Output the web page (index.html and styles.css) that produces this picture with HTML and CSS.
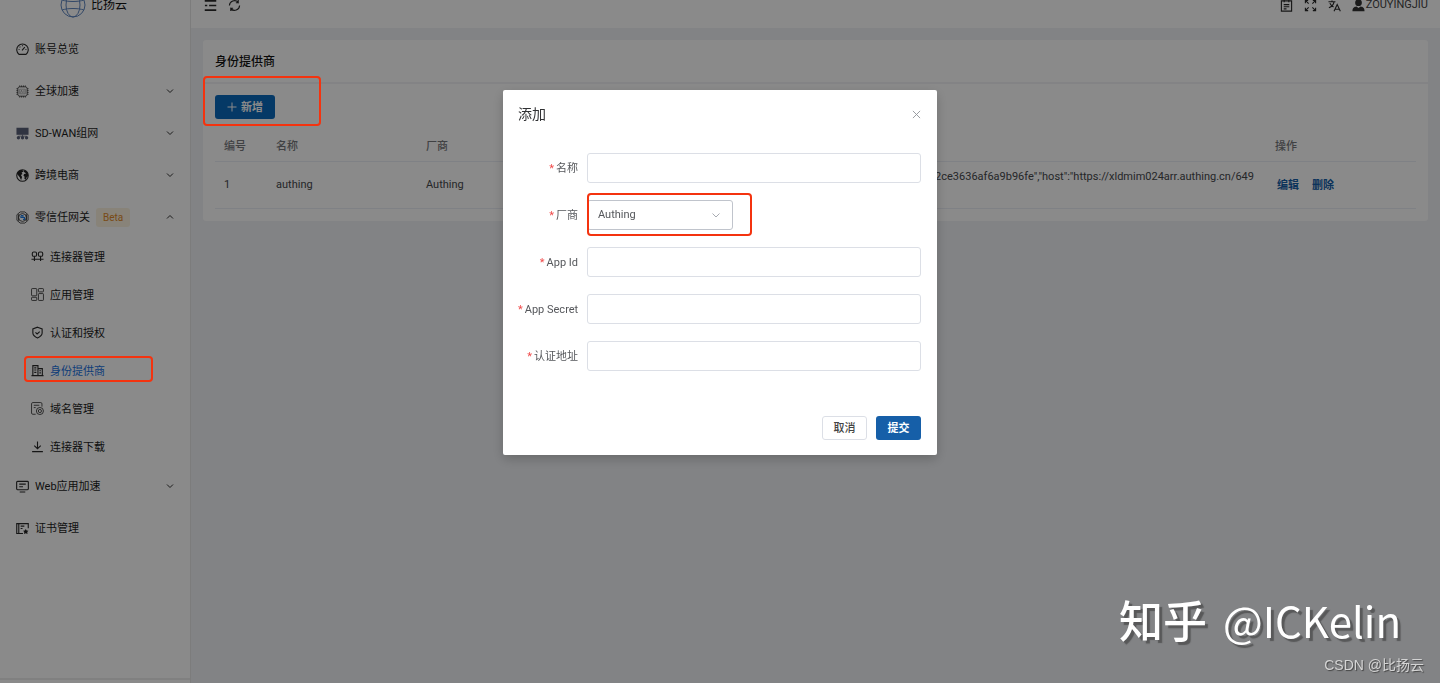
FILE: index.html
```html
<!DOCTYPE html>
<html lang="zh-CN">
<head>
<meta charset="utf-8">
<title>身份提供商</title>
<link rel="stylesheet" href="styles.css">
</head>
<body>
<div class="app">
  <aside class="sidebar">
    <a class="brand" href="#">
      <svg class="brand-mark" viewBox="0 0 26 26" fill="none" stroke="#5f86c0" stroke-width="1"><circle cx="13" cy="13" r="12"/><ellipse cx="13" cy="13" rx="7" ry="12"/><path d="M2 18c6-2 16-2 22 0M2 8c6 2 16 2 22 0"/></svg>
      <span>比扬云</span>
    </a>
    <nav class="menu">
      <a class="item" href="#"><svg class="icon" viewBox="0 0 14 14"><path d="M3.200 12.200a6.200 6.200 0 1 1 7.600 0z"/><path d="M6.500 8l3-3.500M7 2.500v1M2.800 7h1M10.200 7h1M4 4l.6.6"/></svg><span>账号总览</span></a>
      <a class="item" href="#"><svg class="icon thin" viewBox="0 0 14 14"><rect x="2" y="2" width="10" height="10" rx="2"/><path d="M4 .5V2M6 .5V2M8 .5V2M10 .5V2M4 12v1.500M6 12v1.500M8 12v1.500M10 12v1.500M.5 4H2M.5 6H2M.5 8H2M.5 10H2M12 4h1.500M12 6h1.500M12 8h1.500M12 10h1.500"/><path class="faint" d="M4 4.500h6v5H4zM5 8.500l1-3 1 3M8.500 5.500v3"/></svg><span>全球加速</span><svg class="arrow" viewBox="0 0 8 8"><path d="M1 2.500l3 3 3-3"/></svg></a>
      <a class="item" href="#"><svg class="icon solid slate" viewBox="0 0 14 14"><rect x=".5" y=".8" width="13" height="7.600"/><path d="M6.600 8h.8v1.500h-.8zM2.500 9.400h9v.7h-9z"/><circle cx="2.600" cy="11.600" r="1.800"/><circle cx="7" cy="11.600" r="1.800"/><circle cx="11.400" cy="11.600" r="1.800"/></svg><span>SD-WAN组网</span><svg class="arrow" viewBox="0 0 8 8"><path d="M1 2.500l3 3 3-3"/></svg></a>
      <a class="item" href="#"><svg class="icon" viewBox="0 0 14 14"><circle cx="7" cy="7" r="6.200"/><path class="fill" d="M1 5C2.200 2 4.500.8 7 1.200L7.800 3 6 3.800l1 1.700-1.700 1 1.200 2L5.500 12 4 9 2.500 7zM8.500 1.500l2.500.7c1.800 1.500 2.300 3.500 2 5.500L11.500 9l-1 2.500L9 10.500l.3-2.200L8 7l.7-1.500 2-.3-1-1.400-1.500-.6z"/></svg><span>跨境电商</span><svg class="arrow" viewBox="0 0 8 8"><path d="M1 2.500l3 3 3-3"/></svg></a>
      <a class="item" href="#"><svg class="icon thin" viewBox="0 0 14 14"><circle cx="7" cy="7" r="4.200"/><path d="M4.500 1h5L13 4v6l-3.500 3h-5L1 10V4zM2.700 3.500v7M11.300 3.500v7"/><path class="blue" d="M5.300 5h2.200v2h1.700v2H7.500M5.300 5v2h2.200"/></svg><span>零信任网关</span><span class="beta">Beta</span><svg class="arrow" viewBox="0 0 8 8"><path d="M1 5.500l3-3 3 3"/></svg></a>
      <div class="submenu">
        <a class="subitem" href="#"><svg class="icon" viewBox="0 0 14 14"><rect x="1.400" y="2.200" width="4.600" height="4.600" rx="1.500"/><rect x="8" y="2.200" width="4.600" height="4.600" rx="1.500"/><path d="M3.700 6.800v5M10.300 6.800v5M.5 10h13"/></svg><span>连接器管理</span></a>
        <a class="subitem" href="#"><svg class="icon thin" viewBox="0 0 14 14"><rect x=".6" y=".6" width="5.600" height="7.800" rx=".7"/><rect x="8" y=".6" width="5.400" height="3.600" rx=".7"/><rect x=".6" y="10" width="5.600" height="3.400" rx=".7"/><rect x="8" y="6" width="5.400" height="7.400" rx=".7"/></svg><span>应用管理</span></a>
        <a class="subitem" href="#"><svg class="icon" viewBox="0 0 14 14"><path d="M7 1.300l5 1.900v4.300c0 2.200-2 3.900-5 5.300-3-1.400-5-3.100-5-5.300V3.200z"/><path d="M4.800 6.800l1.800 1.700L9.400 6"/></svg><span>认证和授权</span></a>
        <a class="subitem active" href="#"><svg class="icon" viewBox="0 0 14 14"><path d="M.5 12.500h13M2 12.500V1.800h5.500v10.700M7.500 5h4.700v7.500M3.500 4.200h2.300M3.500 6.500h2.300M3.500 9h2.300M9 7.200h1.700M9 9.500h1.700"/></svg><span>身份提供商</span><span class="callout callout-menu"></span></a>
        <a class="subitem" href="#"><svg class="icon thin" viewBox="0 0 14 14"><path d="M5 13.200H2C1.100 13.200.6 12.700.6 12V2C.6 1.100 1.100.6 2 .6h8.500c.8 0 1.300.5 1.300 1.400v3M3 3.500h6M3 6h2"/><circle cx="9.600" cy="9.700" r="3.800"/><circle cx="9.600" cy="9.700" r="1.700"/></svg><span>域名管理</span></a>
        <a class="subitem" href="#"><svg class="icon" viewBox="0 0 14 14"><path d="M7 1.500v7.700M3.500 6L7 9.400 10.500 6M1.200 12.500h11.600"/></svg><span>连接器下载</span></a>
      </div>
      <a class="item" href="#"><svg class="icon" viewBox="0 0 14 14"><rect x=".7" y="1.500" width="12.600" height="9" rx="1"/><path d="M4 12.900h6M3.500 4.500h7M3.500 7.200h4"/></svg><span>Web应用加速</span><svg class="arrow" viewBox="0 0 8 8"><path d="M1 2.500l3 3 3-3"/></svg></a>
      <a class="item" href="#"><svg class="icon" viewBox="0 0 14 14"><path d="M7.500 12.400H.8V1.800h12.400v5M3 1.800v10.600M5 4.500h4M5 7h2"/><path class="fill" d="M10.500 7.500l1 1.700 1.900.3-1.300 1.400.3 2-1.900-.8-1.800.8.2-2-1.300-1.400 1.900-.3z"/></svg><span>证书管理</span></a>
    </nav>
    <div class="sidebar-foot"></div>
  </aside>

  <div class="main">
    <header class="topbar">
      <div class="tools">
        <button class="tool" aria-label="折叠菜单"><svg class="icon bold" viewBox="0 0 14 14"><path d="M.8 2h12.400M5.500 7h7.700M.8 12h12.400M1 7h2.500"/></svg></button>
        <button class="tool" aria-label="刷新"><svg class="icon" viewBox="0 0 14 14"><path d="M1.500 7a5.500 5.500 0 0 1 9.500-3.500V1M11.200 4H8.500M12.500 7A5.500 5.500 0 0 1 3 10.500V13M2.800 10h2.700"/></svg></button>
      </div>
      <div class="tools">
        <button class="tool" aria-label="文档"><svg class="icon" viewBox="0 0 14 14"><path d="M1.500 2h11v11h-11zM4.500.5v3M9.500.5v3M4 6h6M4 8.300h6M4 10.600h3"/></svg></button>
        <button class="tool" aria-label="全屏"><svg class="icon" viewBox="0 0 14 14"><path d="M1.500 4.500v-3h3M9.500 1.500h3v3M12.500 9.500v3h-3M4.500 12.500h-3v-3M1.500 1.500L5 5M12.500 1.500L9 5M12.500 12.500L9 9M1.500 12.500L5 9"/></svg></button>
        <button class="tool" aria-label="语言"><svg class="icon" viewBox="0 0 14 14"><path d="M.5 3H8M4.300 1.500V3M1 9.500C4 8 6 6 6.500 3M2 4.500c1 2 2.300 3.200 4 4M6.500 13.200L9.900 6l3.400 7.200M7.700 11h4.400"/></svg></button>
        <button class="user"><svg class="icon solid" viewBox="0 0 14 14"><circle cx="7" cy="4" r="3.600"/><path d="M.5 13.200c0-3.700 1.800-4.800 4.300-5.100L7 9.600l2.200-1.500c2.500.3 4.300 1.400 4.300 5.100z"/></svg><span>ZOUYINGJIU</span></button>
      </div>
    </header>

    <main class="content">
      <section class="card">
        <h1 class="card-title">身份提供商</h1>
        <div class="card-body">
          <div class="actions">
            <button class="btn btn-primary btn-add"><svg class="plus" viewBox="0 0 10 10"><path d="M5 .5v9M.5 5h9"/></svg><span>新增</span></button>
            <span class="callout callout-add"></span>
          </div>
          <table class="table">
            <thead>
              <tr><th class="col-id">编号</th><th class="col-name">名称</th><th class="col-vendor">厂商</th><th></th><th class="col-ops">操作</th></tr>
            </thead>
            <tbody>
              <tr><td>1</td><td>authing</td><td>Authing</td><td class="config">2ce3636af6a9b96fe","host":"https://xldmim024arr.authing.cn/649</td><td><div class="ops"><a href="#">编辑</a><a href="#">删除</a></div></td></tr>
            </tbody>
          </table>
        </div>
      </section>
    </main>
  </div>
</div>

<div class="overlay">
  <form class="dialog" role="dialog" aria-labelledby="dialog-title">
    <div class="dialog-head">
      <h2 id="dialog-title">添加</h2>
      <button class="close" type="button" aria-label="关闭"><svg viewBox="0 0 10 10"><path d="M1 1l8 8M9 1L1 9"/></svg></button>
    </div>
    <div class="fields">
      <div class="field"><label for="name">名称</label><input id="name" type="text"></div>
      <div class="field"><label for="vendor">厂商</label>
        <div class="select-wrap">
          <select id="vendor"><option>Authing</option></select>
          <svg class="select-arrow" viewBox="0 0 8 8"><path d="M.5 2.500L4 6l3.500-3.500"/></svg>
          <span class="callout callout-select"></span>
        </div>
      </div>
      <div class="field"><label for="appid">App Id</label><input id="appid" type="text"></div>
      <div class="field"><label for="secret">App Secret</label><input id="secret" type="text"></div>
      <div class="field"><label for="url">认证地址</label><input id="url" type="text"></div>
    </div>
    <div class="dialog-foot">
      <button class="btn btn-plain" type="button"><span>取消</span></button>
      <button class="btn btn-primary" type="button"><span>提交</span></button>
    </div>
  </form>
</div>

<div class="marks">
  <div class="mark-large"><span class="mark-site">知乎</span><span>@ICKelin</span></div>
  <div class="mark-small">CSDN @比扬云</div>
</div>
</body>
</html>
```
FILE: styles.css
```css
* { box-sizing: border-box; }

body {
  margin: 0;
  overflow: hidden;
  background: #f0f2f5;
  color: #303133;
  font: 11px/16px Roboto, "Noto Sans CJK SC", sans-serif;
}

button, input, select { font: inherit; color: inherit; }
button { padding: 0; border: 0; background: none; cursor: pointer; }
a { color: inherit; text-decoration: none; }
svg { flex: none; }

/* The page is scrolled slightly past its top edge. */
.app {
  display: flex;
  height: calc(100vh + 18px);
  margin-top: -18px;
}

.icon {
  width: 13px;
  height: 13px;
  fill: none;
  stroke: #2a2a2a;
  stroke-width: 1.2;
}
.icon.thin { stroke: #333; stroke-width: 0.9; }
.icon.bold { stroke-width: 1.8; }
.icon.solid { fill: #333; stroke: none; }
.icon.slate { fill: #5a6078; }
.icon .fill { fill: #222; stroke: none; }
.icon .faint { stroke: #888; stroke-width: 0.7; }
.icon .blue { stroke: #1c7be0; stroke-width: 1.2; }

.sidebar {
  display: flex;
  flex: none;
  flex-direction: column;
  width: 191px;
  border-right: 1px solid #e6e6e6;
  background: #fff;
}
.brand {
  display: flex;
  align-items: center;
  gap: 5px;
  height: 46px;
  padding-left: 60px;
  color: #111;
  font-size: 12px;
}
.brand-mark { width: 26px; height: 26px; }
.menu { flex: 1; color: #1c1c1c; }
.item {
  display: flex;
  align-items: center;
  gap: 6px;
  height: 42px;
  padding: 0 16px;
}
.item span, .subitem span, .btn span { padding-top: 2px; }
.arrow {
  width: 8px;
  height: 8px;
  margin-left: auto;
  fill: none;
  stroke: #333;
}
.item .beta {
  padding: 2px 7px 1px;
  border-radius: 3px;
  background: #fbf3df;
  color: #e08a2c;
  font-size: 10px;
}
.submenu { display: grid; gap: 1px; }
.subitem {
  position: relative;
  display: flex;
  align-items: center;
  gap: 6px;
  height: 37px;
  padding-left: 31px;
}
.subitem.active { color: #2272e0; }
.sidebar-foot { height: 5px; border-top: 2px solid #ededed; }

.main { flex: 1; min-width: 0; }
.topbar {
  display: flex;
  align-items: center;
  justify-content: space-between;
  height: 46px;
  padding: 0 12px 0 13px;
  background: #fff;
}
.tools { display: flex; align-items: center; gap: 11px; }
.tool, .user { display: flex; align-items: center; }
.user { gap: 1px; color: #444; }

.content { padding: 12px; }
.card { border-radius: 3px; background: #fff; }
.card-title {
  margin: 0;
  padding: 14px 12px 12px;
  border-bottom: 2px solid #f2f3f5;
  color: #111;
  font-size: 12px;
  font-weight: 500;
}
.card-body { padding: 11px 12px 12px; }
.actions { position: relative; display: flex; }

.btn {
  display: inline-flex;
  align-items: center;
  justify-content: center;
  gap: 4px;
  width: 45px;
  height: 24px;
  border-radius: 3px;
}
.btn-primary { background: #165fa8; color: #fff; font-weight: 700; }
.btn-plain { border: 1px solid #dcdfe6; background: #fff; color: #444; font-weight: 500; }
.btn-add { width: 60px; background: #0a69bd; }
.plus { width: 10px; height: 10px; fill: none; stroke: #fff; }

.table {
  width: 100%;
  margin-top: 11px;
  border-collapse: collapse;
  table-layout: fixed;
}
.table th, .table td { padding: 0 9px; border-bottom: 1px solid #ebeef5; text-align: left; }
.table th { height: 31px; padding-top: 3px; color: #77797d; font-weight: 500; }
.table td { height: 47px; padding-top: 1px; color: #46484c; }
.col-id { width: 52px; }
.col-name { width: 150px; }
.col-vendor { width: 150px; }
.col-ops { width: 150px; }
.table .config {
  padding: 7px 12px 0;
  text-align: right;
  vertical-align: top;
  white-space: nowrap;
}
.ops { display: flex; gap: 13px; padding: 1px 0 0 2px; color: #165fa8; font-weight: 700; }

.overlay {
  position: fixed;
  inset: 0;
  z-index: 10;
  padding-top: 90px;
  background: rgba(0, 0, 0, 0.46);
}
.dialog {
  width: calc(30vw + 2px);
  min-width: 400px;
  margin: 0 auto;
  padding: 15px 16px 15px 15px;
  border-radius: 2px;
  background: #fff;
  box-shadow: 0 4px 12px rgba(0, 0, 0, 0.2);
}
.dialog-head {
  display: flex;
  align-items: center;
  justify-content: space-between;
  height: 18px;
}
.dialog-head h2 { margin: 0; font-size: 14px; font-weight: 400; }
.close svg { display: block; width: 9px; height: 9px; fill: none; stroke: #909399; }
.fields { display: grid; gap: 17px; padding-top: 30px; }
.field { display: flex; align-items: center; }
.field label {
  flex: none;
  width: 69px;
  padding-top: 1px;
  padding-right: 9px;
  color: #55575b;
  text-align: right;
  white-space: nowrap;
}
.field label::before { content: "*"; margin-right: 2px; color: #f04b4b; }
.field input, .field select {
  flex: 1;
  min-width: 0;
  height: 30px;
  padding: 0 10px;
  border: 1px solid #dcdfe6;
  border-radius: 3px;
  background: #fff;
  color: #55575b;
}
.select-wrap { position: relative; display: flex; width: 146px; }
.field select { border-color: #c0c4cc; appearance: none; }
.select-arrow {
  position: absolute;
  top: 11px;
  right: 13px;
  width: 8px;
  height: 8px;
  fill: none;
  stroke: #a8abb2;
}
.dialog-foot { display: flex; justify-content: flex-end; gap: 9px; padding-top: 45px; }

/* Red frames that point out the steps of the walkthrough. */
.callout {
  position: absolute;
  z-index: 20;
  border: 2px solid #f4330f;
  border-radius: 4px;
  pointer-events: none;
}
.callout-menu { inset: 4px 37px 7px 24px; }
.callout-add { top: -19px; left: -12px; width: 118px; height: 50px; }
.callout-select { inset: -7px -19px -6px 0; }

.marks {
  position: fixed;
  right: 16px;
  bottom: 8px;
  z-index: 30;
  display: grid;
  gap: 3px;
  justify-items: end;
}
.mark-large {
  display: flex;
  align-items: baseline;
  gap: 16px;
  padding-right: 23px;
  color: #fff;
  font: 400 42px/64px "Noto Sans CJK SC", sans-serif;
  text-shadow: 3px 3px 1px rgba(60, 60, 60, 0.6);
}
.mark-site { font-size: 44px; font-weight: 500; }
.mark-small {
  color: #d4d4d4;
  font: 14px/20px "Liberation Sans", "Noto Sans CJK SC", sans-serif;
  text-shadow: 1px 1px 1px #444;
}
```
